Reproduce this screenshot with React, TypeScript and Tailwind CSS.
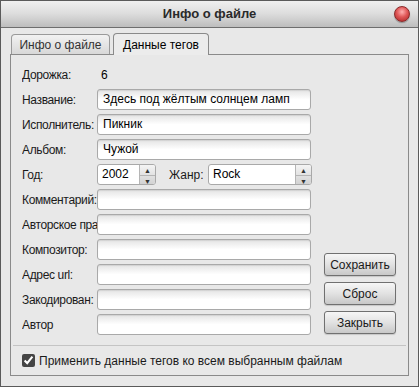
import React, { useState } from 'react';

const font = { fontFamily: '"Liberation Sans", Arial, sans-serif' };

const Field: React.FC<{ value?: string; className?: string }> = ({ value = '', className = 'w-[214px]' }) => (
  <div
    className={`h-[21px] ${className} rounded-[3px] border border-[#a9a9a9] bg-gradient-to-b from-[#e4e4e4] via-white to-white px-[5px] text-[12px] leading-[19px] text-black shadow-[inset_0_1px_1px_rgba(0,0,0,0.08)] overflow-hidden whitespace-nowrap`}
  >
    {value}
  </div>
);

const Row: React.FC<{ label: string; children: React.ReactNode }> = ({ label, children }) => (
  <div className="flex h-[21px] items-center">
    <div className="w-[75px] shrink-0 overflow-hidden whitespace-nowrap text-[12px] tracking-[-0.35px] text-[#1a1a1a]">{label}</div>
    {children}
  </div>
);

const Spinner: React.FC = () => (
  <div className="flex h-[21px] w-[16px] flex-col border-l border-[#b5b5b5] bg-gradient-to-b from-[#f4f4f4] to-[#cfcfcf]">
    <div className="flex flex-1 items-center justify-center text-[7px] leading-none text-[#333]">▲</div>
    <div className="flex flex-1 items-center justify-center border-t border-[#b5b5b5] text-[7px] leading-none text-[#333]">▼</div>
  </div>
);

const Btn: React.FC<{ label: string }> = ({ label }) => (
  <button className="h-[23px] w-[72px] rounded-[3px] border border-[#707070] bg-gradient-to-b from-[#f6f6f6] via-[#e2e2e2] to-[#c8c8c8] text-[12px] text-[#1a1a1a] shadow-[0_1px_1px_rgba(0,0,0,0.15)]">
    {label}
  </button>
);

export default function App() {
  const [checked, setChecked] = useState(true);

  return (
    <div className="h-[387px] w-[419px] bg-white" style={font}>
      <div className="flex h-full w-full flex-col border border-[#5a5a5a] bg-[#e8e8e8]">
        {/* title bar */}
        <div className="relative flex h-[27px] shrink-0 items-center justify-center border-b border-[#6e6e6e] bg-gradient-to-b from-[#f0f0f0] via-[#dcdcdc] to-[#bdbdbd]">
          <span className="text-[13px] font-bold text-[#2a2a2a]">Инфо о файле</span>
          <div className="absolute right-[8px] top-[5px] h-[16px] w-[16px] rounded-full border border-[#8a2a2a] bg-[radial-gradient(circle_at_50%_35%,#ffb0b0_0%,#e05858_45%,#a82020_100%)] shadow-[0_1px_1px_rgba(0,0,0,0.3)]" />
        </div>

        {/* tabs */}
        <div className="flex h-[26px] shrink-0 items-end pl-[10px]">
          <div className="flex h-[20px] w-[99px] items-center justify-center rounded-t-[4px] border border-b-0 border-[#9a9a9a] bg-gradient-to-b from-[#f2f2f2] to-[#d8d8d8] text-[12px] text-[#333]">
            Инфо о файле
          </div>
          <div className="relative z-10 -mb-px ml-[3px] flex h-[22px] w-[96px] items-center justify-center rounded-t-[4px] border border-b-0 border-[#8a8a8a] bg-[#ececec] text-[12px] text-black">
            Данные тегов
          </div>
        </div>

        {/* panel */}
        <div className="mx-[9px] mb-[10px] flex flex-1 flex-col border border-[#8a8a8a] bg-[#e8e8e8]">
          <div className="flex pl-[11px] pt-[9px]">
            <div className="flex flex-col gap-[4px]">
              <Row label="Дорожка:">
                <div className="px-[4px] text-[12px] font-normal">6</div>
              </Row>
              <Row label="Название:">
                <Field value="Здесь под жёлтым солнцем ламп" />
              </Row>
              <Row label="Исполнитель:">
                <Field value="Пикник" />
              </Row>
              <Row label="Альбом:">
                <Field value="Чужой" />
              </Row>
              <Row label="Год:">
                <div className="flex h-[21px] w-[59px] overflow-hidden rounded-[3px] border border-[#a9a9a9] bg-white">
                  <div className="flex-1 px-[4px] text-[12px] leading-[19px]">2002</div>
                  <Spinner />
                </div>
                <div className="ml-[13px] w-[39px] text-[12px] text-[#1a1a1a]">Жанр:</div>
                <div className="flex h-[21px] w-[104px] overflow-hidden rounded-[3px] border border-[#a9a9a9] bg-white">
                  <div className="flex-1 px-[4px] text-[12px] leading-[19px]">Rock</div>
                  <Spinner />
                </div>
              </Row>
              <Row label="Комментарий:">
                <Field />
              </Row>
              <Row label="Авторское право:">
                <Field />
              </Row>
              <Row label="Композитор:">
                <Field />
              </Row>
              <Row label="Адрес url:">
                <Field />
              </Row>
              <Row label="Закодирован:">
                <Field />
              </Row>
              <Row label="Автор">
                <Field />
              </Row>
            </div>
            <div className="ml-[12px] flex flex-col justify-end gap-[6px] pb-[1px]">
              <Btn label="Сохранить" />
              <Btn label="Сброс" />
              <Btn label="Закрыть" />
            </div>
          </div>

          <div className="mx-[2px] mt-[10px] border-t border-[#c4c4c4]" />

          <label className="flex flex-1 items-center gap-[4px] pl-[11px] text-[12px] text-[#1a1a1a]">
            <input
              type="checkbox"
              checked={checked}
              onChange={(e) => setChecked(e.target.checked)}
              className="h-[13px] w-[13px] accent-[#444]"
            />
            Применить данные тегов ко всем выбранным файлам
          </label>
        </div>
      </div>
    </div>
  );
}
